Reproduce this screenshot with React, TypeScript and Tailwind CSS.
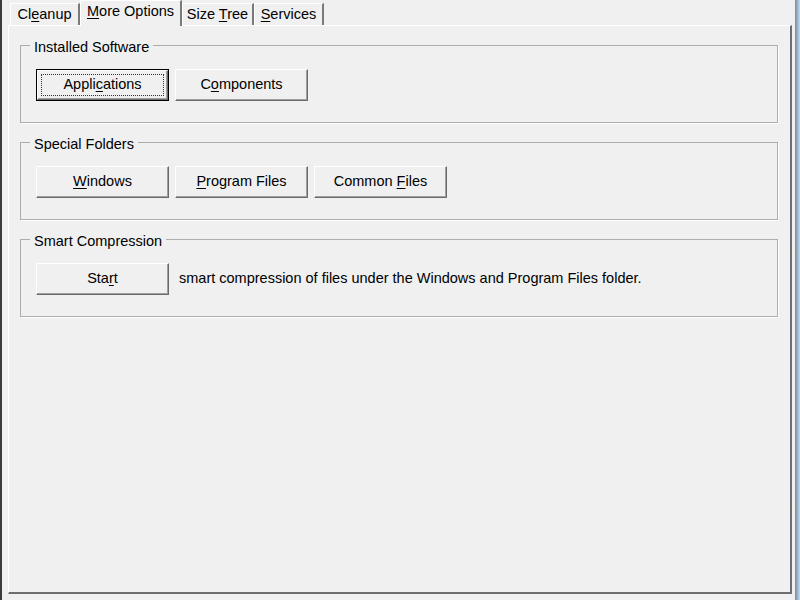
import { ReactNode } from "react";

// Mnemonic: underline one letter, like Win32 "&" labels.
function Mn({ text, at }: { text: string; at: number }) {
  return (
    <span className="whitespace-pre">
      {text.slice(0, at)}
      <span className="underline underline-offset-2">{text[at]}</span>
      {text.slice(at + 1)}
    </span>
  );
}

function Tab({ children, width, active }: { children: ReactNode; width: string; active?: boolean }) {
  return (
    <div
      className={`flex items-center justify-center border-l border-t border-r-2 border-l-white border-t-white border-r-[#7a7a7a] bg-[#f0f0f0] ${width} ${
        active ? "relative z-10 -mb-px h-[26px] pb-[3px]" : "h-[22px]"
      }`}
    >
      {children}
    </div>
  );
}

function Btn({ children, isDefault }: { children: ReactNode; isDefault?: boolean }) {
  if (isDefault) {
    return (
      <button type="button" className="h-[32px] w-[133px] border border-black bg-[#f0f0f0] p-0">
        <div className="h-full w-full border border-b-[#6b6b6b] border-l-white border-r-[#6b6b6b] border-t-white p-[3px] shadow-[inset_-1px_-1px_0_#a0a0a0]">
          <div className="flex h-full items-center justify-center border border-dotted border-[#333]">
            {children}
          </div>
        </div>
      </button>
    );
  }
  return (
    <button
      type="button"
      className="flex h-[32px] w-[133px] items-center justify-center border border-b-[#6b6b6b] border-l-white border-r-[#6b6b6b] border-t-white bg-[#f0f0f0] shadow-[inset_-1px_-1px_0_#a0a0a0]"
    >
      {children}
    </button>
  );
}

function Group({ title, children }: { title: string; children: ReactNode }) {
  return (
    <fieldset className="border border-[#adadad] pb-[21px] pl-[9px] pr-[9px] pt-[16px] shadow-[1px_1px_0_#fff]">
      <legend className="px-[4px] leading-[16px]">
        <span className="relative top-[2px]">{title}</span>
      </legend>
      <div className="flex items-center gap-[6px] pl-[6px]">{children}</div>
    </fieldset>
  );
}

export default function App() {
  return (
    <div className="flex h-[600px] w-[800px] overflow-hidden bg-[#f0f0f0] font-['Liberation_Sans',Arial,sans-serif] text-[14.5px] text-black">
      <div className="w-[2px] bg-[#3c3c3c]" />
      <div className="flex flex-1 flex-col pb-[6px] pl-[6px]">
        <div className="flex h-[25px] items-end pl-[2px]">
          <Tab width="w-[70px]">
            <Mn text="Cleanup" at={2} />
          </Tab>
          <Tab width="w-[102px]" active>
            <Mn text="More Options" at={0} />
          </Tab>
          <Tab width="w-[72px]">
            <Mn text="Size Tree" at={5} />
          </Tab>
          <Tab width="w-[70px]">
            <Mn text="Services" at={0} />
          </Tab>
        </div>

        <div className="flex flex-1 flex-col gap-[11px] border-b-2 border-l border-r-2 border-t border-b-[#6e6e6e] border-l-white border-r-[#6e6e6e] border-t-white pl-[11px] pr-[12px] pt-[11px]">
          <Group title="Installed Software">
            <Btn isDefault>
              <Mn text="Applications" at={5} />
            </Btn>
            <Btn>
              <Mn text="Components" at={1} />
            </Btn>
          </Group>

          <Group title="Special Folders">
            <Btn>
              <Mn text="Windows" at={0} />
            </Btn>
            <Btn>
              <Mn text="Program Files" at={0} />
            </Btn>
            <Btn>
              <Mn text="Common Files" at={7} />
            </Btn>
          </Group>

          <Group title="Smart Compression">
            <Btn>
              <Mn text="Start" at={3} />
            </Btn>
            <span className="ml-[4px]">
              smart compression of files under the Windows and Program Files folder.
            </span>
          </Group>
        </div>
      </div>
      <div className="w-[3px]" />
      <div className="w-[5px] bg-linear-to-r from-[#6f8ca6] to-[#c4dcee]" />
    </div>
  );
}
